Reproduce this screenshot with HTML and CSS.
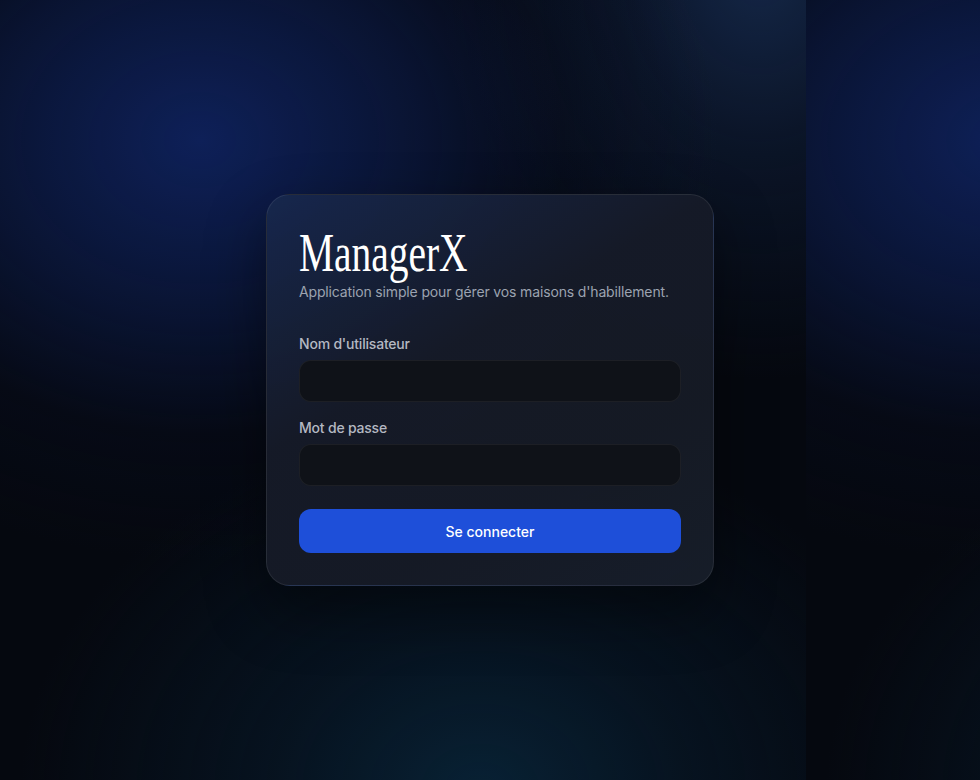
FILE: index.html
```html
<!DOCTYPE html>
<html lang="fr">
<head>
<meta charset="utf-8">
<title>ManagerX</title>
<link rel="stylesheet" href="styles.css">
</head>
<body>
<main class="page">
  <form class="card">
    <h1 class="brand"><span class="brand-text">ManagerX</span></h1>
    <p class="tagline">Application simple pour gérer vos maisons d'habillement.</p>
    <div class="fields">
      <label class="field">
        <span class="field-label">Nom d'utilisateur</span>
        <input class="field-input" type="text">
      </label>
      <label class="field">
        <span class="field-label">Mot de passe</span>
        <input class="field-input" type="password">
      </label>
    </div>
    <button class="submit" type="button">Se connecter</button>
  </form>
</main>
</body>
</html>
```

FILE: styles.css
```css
html, body {
  margin: 0;
  padding: 0;
  height: 100%;
}

body {
  background-color: #05080f;
  background-image:
    radial-gradient(ellipse 520px 420px at 200px 140px, rgba(14, 32, 88, 1) 0%, rgba(12, 27, 72, 0.65) 40%, rgba(8, 15, 40, 0.25) 70%, rgba(5, 8, 15, 0) 100%),
    radial-gradient(ellipse 320px 420px at 760px -40px, rgba(22, 42, 78, 0.9) 0%, rgba(15, 30, 58, 0.55) 45%, rgba(5, 8, 15, 0) 100%),
    radial-gradient(ellipse 460px 360px at 480px 790px, rgba(8, 33, 52, 1) 0%, rgba(7, 24, 40, 0.65) 45%, rgba(5, 8, 15, 0) 100%);
  background-size: 806px 780px;
  background-repeat: repeat;
  font-family: "Inter", "Noto Sans", sans-serif;
  color: #e8eaf0;
}

.page {
  min-height: 100%;
  display: flex;
  align-items: center;
  justify-content: center;
}

.card {
  width: 382px;
  padding: 32px;
  border-radius: 24px;
  border: 1px solid rgba(255, 255, 255, 0.08);
  background: linear-gradient(150deg, rgba(24, 40, 78, 0.92) 0%, rgba(22, 27, 40, 0.95) 40%, rgba(22, 27, 38, 0.95) 70%, rgba(23, 30, 42, 0.96) 100%);
  box-shadow: 0 24px 60px rgba(0, 0, 0, 0.45);
  display: flex;
  flex-direction: column;
}

.brand {
  margin: 0;
  font-family: "Liberation Serif", "DejaVu Serif", serif;
  font-weight: 400;
  font-size: 54px;
  line-height: 53px;
  color: #ffffff;
}

.brand-text {
  display: inline-block;
  transform: scaleX(0.73);
  transform-origin: left center;
}

.tagline {
  margin: 2px 0 0;
  font-size: 14px;
  line-height: 20px;
  letter-spacing: -0.15px;
  color: #9ca3b0;
}

.fields {
  margin-top: 32px;
  display: flex;
  flex-direction: column;
  gap: 16px;
}

.field {
  display: flex;
  flex-direction: column;
  gap: 6px;
}

.field-label {
  font-size: 14px;
  line-height: 20px;
  font-weight: 500;
  letter-spacing: -0.2px;
  color: #b4b8c2;
}

.field-input {
  box-sizing: border-box;
  height: 42px;
  width: 100%;
  border-radius: 12px;
  border: 1px solid rgba(255, 255, 255, 0.06);
  background: #0f1218;
  color: #e8eaf0;
  padding: 0 14px;
  font: inherit;
  outline: none;
}

.submit {
  margin-top: 23px;
  height: 44px;
  border: 0;
  border-radius: 12px;
  background: #1e4fd9;
  color: #ffffff;
  font-family: inherit;
  font-size: 14px;
  font-weight: 500;
  cursor: pointer;
}
```
